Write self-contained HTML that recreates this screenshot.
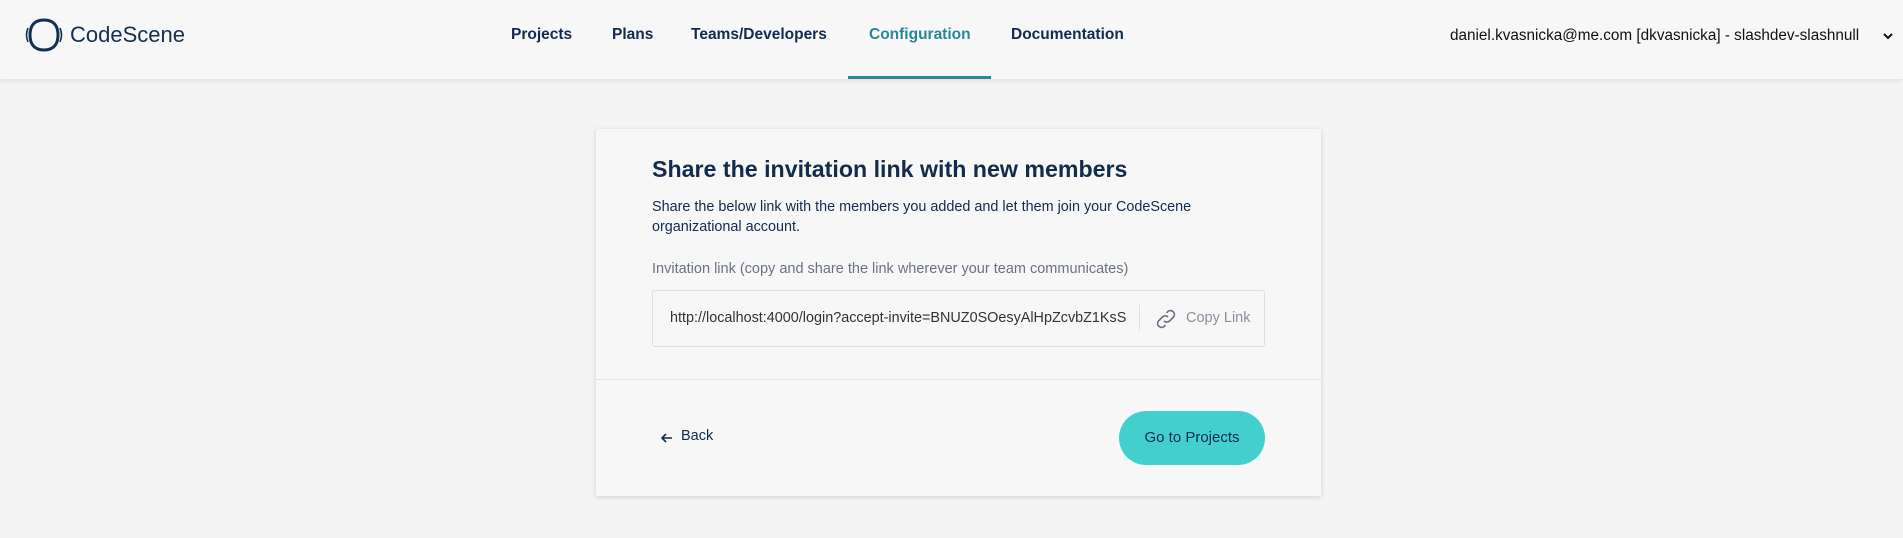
<!DOCTYPE html>
<html><head><meta charset="utf-8"><style>
*{margin:0;padding:0;box-sizing:border-box}
body{width:1903px;height:538px;background:#f4f4f4;font-family:"Liberation Sans",sans-serif;color:#132b4c;position:relative;overflow:hidden}
.hdr{position:absolute;left:0;top:0;width:1903px;height:79px;background:#f7f7f7;box-shadow:0 2px 5px rgba(0,0,0,.08)}
.a{position:absolute;white-space:nowrap}
.nav{font-weight:bold;font-size:15.5px;top:26px}
.card{position:absolute;left:596px;top:129px;width:725px;height:367px;background:#f7f7f7;box-shadow:0 1px 5px rgba(0,0,0,.15)}
</style></head><body>
<div class="hdr">
<svg class="a" style="left:23px;top:18px" width="42" height="34" viewBox="0 0 42 34"><path d="M5 10 Q2 17 5 24" stroke="#14304f" stroke-width="1.6" fill="none"/><path d="M37 10 Q40 17 37 24" stroke="#14304f" stroke-width="1.6" fill="none"/><path d="M21 2 C31 2 35 8 35 17 C35 27 30 32 21 32 C12 32 7 27 7 17 C7 8 11 2 21 2 Z" stroke="#14304f" stroke-width="3" fill="none"/></svg>
<div class="a" style="left:70px;top:22px;font-size:22px;color:#14304f">CodeScene</div>
<div class="a nav" style="left:511px">Projects</div>
<div class="a nav" style="left:612px">Plans</div>
<div class="a nav" style="left:691px">Teams/Developers</div>
<div class="a nav" style="left:869px;color:#2a8796">Configuration</div>
<div class="a nav" style="left:1011px">Documentation</div>
<div class="a" style="left:848px;top:76px;width:143px;height:3px;background:#2a8796"></div>
<div class="a" style="left:1450px;top:27px;font-size:15.3px;color:#111">daniel.kvasnicka@me.com [dkvasnicka] - slashdev-slashnull</div>
<svg class="a" style="left:1883px;top:32px" width="10" height="8" viewBox="0 0 10 8"><path d="M1 2 L5 6 L9 2" stroke="#111" stroke-width="2" fill="none"/></svg>
</div>
<div class="card">
<div class="a" style="left:56px;top:27px;font-size:23.2px;font-weight:bold">Share the invitation link with new members</div>
<div class="a" style="left:56px;top:68px;font-size:14.4px;line-height:20px">Share the below link with the members you added and let them join your CodeScene<br>organizational account.</div>
<div class="a" style="left:56px;top:132px;font-size:14.5px;color:#6b7383">Invitation link (copy and share the link wherever your team communicates)</div>
<div class="a" style="left:56px;top:161px;width:613px;height:57px;border:1px solid #dcdfe6;border-radius:3px"></div>
<div class="a" style="left:74px;top:181px;font-size:14.4px;color:#333">http://localhost:4000/login?accept-invite=BNUZ0SOesyAlHpZcvbZ1KsS</div>
<div class="a" style="left:543px;top:176px;width:1px;height:26px;background:#dcdfe6"></div>
<svg class="a" style="left:558px;top:178px" width="24" height="24" viewBox="0 0 24 24" fill="none" stroke="#6b7383" stroke-width="1.6"><path d="M10 14 a4 4 0 0 0 5.6 0 l4 -4 a4 4 0 0 0 -5.6 -5.6 l-1.5 1.5"/><path d="M14 10 a4 4 0 0 0 -5.6 0 l-4 4 a4 4 0 0 0 5.6 5.6 l1.5 -1.5"/></svg>
<div class="a" style="left:590px;top:181px;font-size:14.5px;color:#8a909c">Copy Link</div>
<div class="a" style="left:0;top:250px;width:725px;height:1px;background:#e1e3e8"></div>
<svg class="a" style="left:64px;top:302px" width="14" height="14" viewBox="0 0 14 14" fill="none" stroke="#132b4c" stroke-width="1.6"><path d="M12 7 H2 M6 3 L2 7 L6 11"/></svg>
<div class="a" style="left:85px;top:299px;font-size:14.5px">Back</div>
<div class="a" style="left:523px;top:282px;width:146px;height:54px;border-radius:27px;background:#44cfcf;font-size:15px;text-align:center;line-height:54px">Go to Projects</div>
</div>
</body></html>
